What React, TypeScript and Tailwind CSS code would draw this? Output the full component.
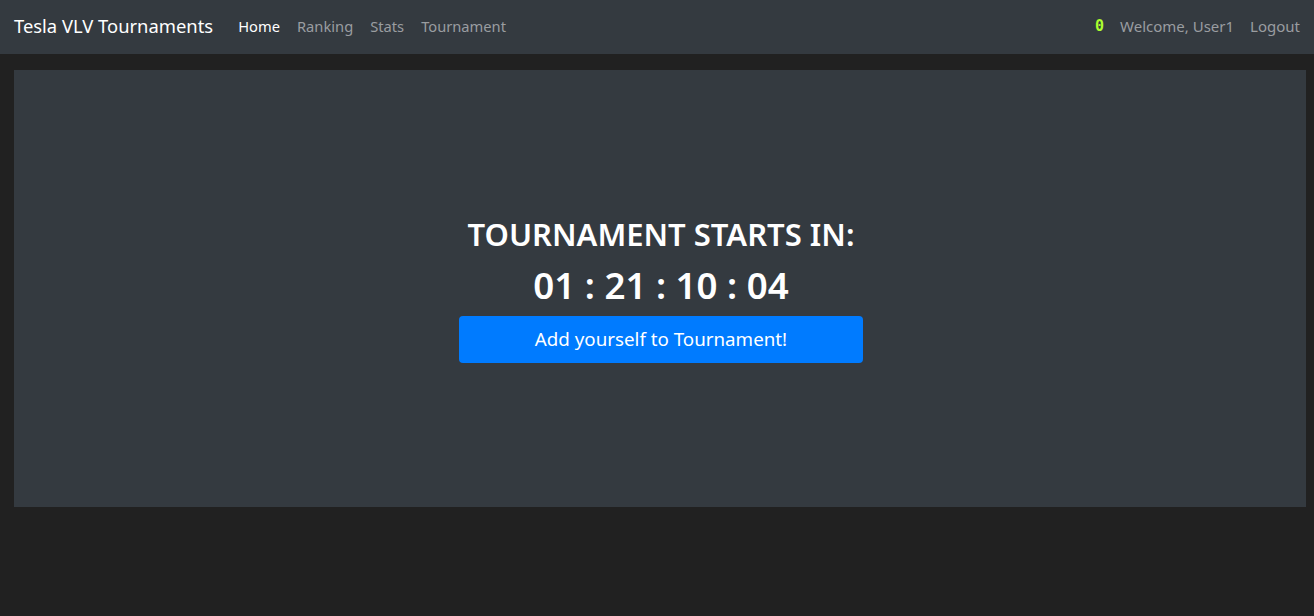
export default function App() {
  return (
    <div
      className="min-h-screen bg-[#212121] text-white"
      style={{ fontFamily: '"Noto Sans", "Open Sans", sans-serif' }}
    >
      <nav className="flex h-[54px] items-center justify-between bg-[#343a40] px-[14px] pb-[2px]">
        <div className="flex items-center">
          <span className="mr-[25px] text-[18.4px] text-white">Tesla VLV Tournaments</span>
          <div className="flex items-center gap-[17px] text-[14.7px]">
            <a className="text-white">Home</a>
            <a className="text-[#9a9da0]">Ranking</a>
            <a className="text-[#9a9da0]">Stats</a>
            <a className="text-[#9a9da0]">Tournament</a>
          </div>
        </div>
        <div className="flex items-center gap-[16px] text-[15px]">
          <span
            className="text-[15px] font-bold text-[#adff2f]"
            style={{ fontFamily: '"DejaVu Sans Mono", monospace' }}
          >
            0
          </span>
          <span className="text-[#9a9da0]">Welcome, User1</span>
          <a className="text-[#9a9da0]">Logout</a>
        </div>
      </nav>

      <div className="ml-[14px] mr-[8px] mt-[16px] flex h-[437px] flex-col items-center justify-center bg-[#343a40] pl-[2px]">
        <h1 className="text-[31px] font-semibold leading-[40px]">TOURNAMENT STARTS IN:</h1>
        <div className="mt-[6px] text-[36.7px] font-semibold leading-[50px]">01 : 21 : 10 : 04</div>
        <button className="mt-[6px] h-[47px] w-[404px] rounded-[4px] bg-[#007bff] text-[18.75px] text-white">
          Add yourself to Tournament!
        </button>
      </div>
    </div>
  );
}
